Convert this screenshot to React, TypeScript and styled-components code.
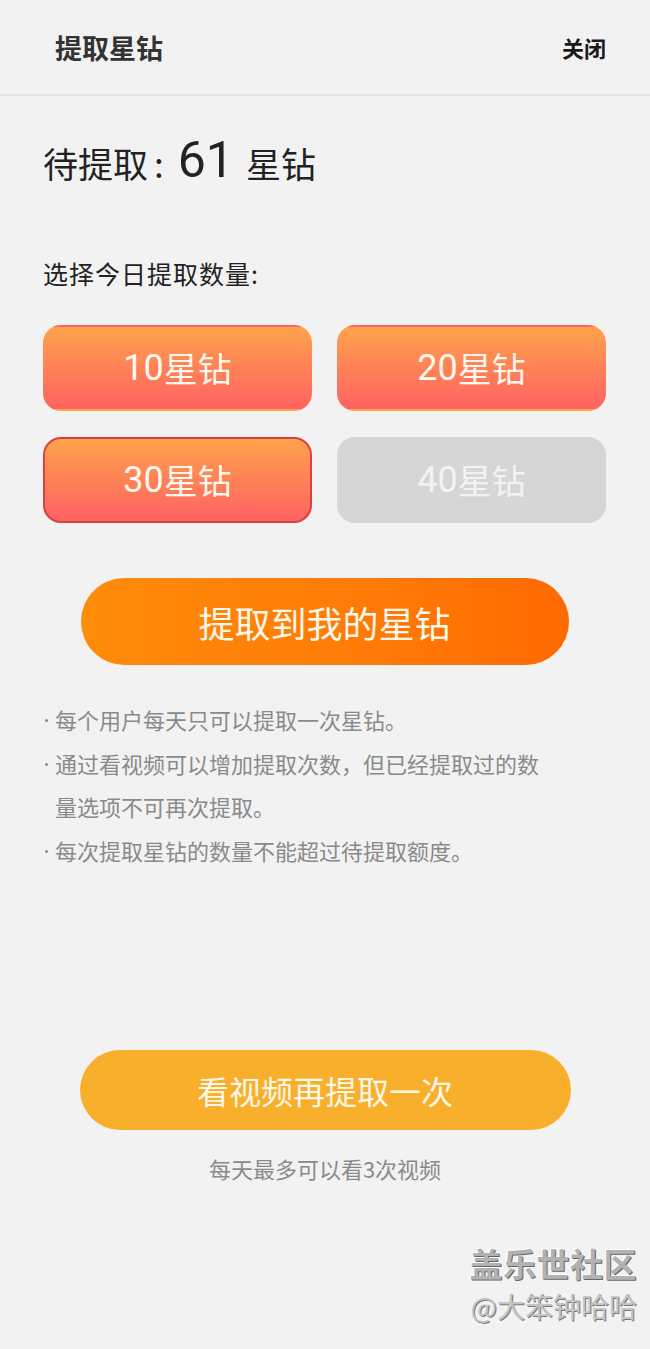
import React, { useState } from "react";
import styled, { createGlobalStyle, css } from "styled-components";

const Global = createGlobalStyle`
  html, body { margin: 0; padding: 0; background: #f2f2f2; }
  body { font-family: "Noto Sans CJK SC", "Noto Sans", sans-serif; }
  * { box-sizing: border-box; }
`;

const Page = styled.div`
  width: 650px;
  height: 1349px;
  background: #f2f2f2;
  display: flex;
  flex-direction: column;
`;

const Header = styled.header`
  height: 96px;
  flex: none;
  display: flex;
  align-items: center;
  justify-content: space-between;
  padding: 0 44px 0 55px;
  border-bottom: 2px solid #e6e6e6;
`;

const HeaderTitle = styled.h1`
  margin: 0;
  font-size: 27px;
  font-weight: 700;
  color: #333;
  line-height: 1;
`;

const CloseButton = styled.button`
  border: none;
  background: none;
  padding: 0;
  font-family: inherit;
  font-size: 22px;
  font-weight: 700;
  color: #1a1a1a;
  line-height: 1;
`;

const Body = styled.main`
  flex: 1;
  display: flex;
  flex-direction: column;
  padding: 0 43px;
`;

const Pending = styled.div`
  margin-top: 36px;
  height: 60px;
  display: flex;
  align-items: center;
  font-size: 35px;
  color: #222;
  line-height: 1;
`;

const Colon = styled.span`
  margin-left: 6px;
`;

const Amount = styled.span`
  font-family: "Roboto", "Noto Sans", sans-serif;
  font-size: 50px;
  margin: 0 12px 0 14px;
  position: relative;
  top: -2px;
`;

const Label = styled.div`
  margin-top: 66px;
  font-size: 25px;
  letter-spacing: 1px;
  color: #222;
  line-height: 30px;
`;

const Grid = styled.div`
  margin-top: 37px;
  display: grid;
  grid-template-columns: 269px 269px;
  column-gap: 25px;
  row-gap: 26px;
`;

const Choice = styled.button<{ $selected?: boolean; $disabled?: boolean }>`
  height: 86px;
  border-radius: 18px;
  border: 2px solid transparent;
  background: linear-gradient(180deg, #ffa24c 0%, #ff6262 100%);
  color: #fff8ee;
  font-family: "Noto Sans CJK SC", sans-serif;
  font-size: 34px;
  display: flex;
  align-items: center;
  justify-content: center;
  padding: 0;
  line-height: 1;
  ${(p) =>
    p.$selected &&
    css`
      border-color: #d9423e;
    `}
  ${(p) =>
    p.$disabled &&
    css`
      background: #d6d6d6;
      color: #f3f3f3;
    `}
`;

const Digits = styled.span`
  font-family: "Roboto", "Noto Sans", sans-serif;
  font-size: 36px;
`;

const PrimaryRow = styled.div`
  margin-top: 55px;
  display: flex;
  justify-content: center;
  padding-right: 1px;
`;

const PrimaryButton = styled.button`
  width: 488px;
  height: 87px;
  border: none;
  border-radius: 44px;
  background: linear-gradient(90deg, #ff8c0a 0%, #ff7a06 60%, #ff6a00 100%);
  color: #fff7ea;
  font-family: "Noto Sans CJK SC", sans-serif;
  font-size: 36px;
  line-height: 1;
`;

const Notes = styled.ul`
  list-style: none;
  margin: 33px 0 0 0;
  padding: 0 0 0 12px;
  font-size: 22px;
  line-height: 43.5px;
  color: #8a8a8a;
  width: 504px;
`;

const Note = styled.li`
  position: relative;
  &::before {
    content: "";
    position: absolute;
    left: -10px;
    top: 21px;
    width: 3px;
    height: 3px;
    border-radius: 50%;
    background: #8a8a8a;
  }
`;

const Spacer = styled.div`
  flex: 1;
`;

const WatchRow = styled.div`
  display: flex;
  justify-content: center;
`;

const WatchButton = styled.button`
  width: 491px;
  height: 80px;
  border: none;
  border-radius: 40px;
  background: #f8b02c;
  color: #fff7e8;
  font-family: "Noto Sans CJK SC", sans-serif;
  font-size: 32px;
  line-height: 1;
`;

const Hint = styled.div`
  margin-top: 25px;
  text-align: center;
  font-size: 22px;
  line-height: 26px;
  color: #8a8a8a;
`;

const Watermark = styled.div`
  margin-top: 66px;
  margin-bottom: 29px;
  align-self: flex-end;
  margin-right: -30px;
  display: flex;
  flex-direction: column;
  align-items: flex-end;
  line-height: 1;
`;

const WmTitle = styled.div`
  font-size: 33px;
  font-weight: 700;
  letter-spacing: 0.5px;
  color: #b2b2b2;
  text-shadow: 1px 1px 0 #666, -1px -1px 0 #fff;
`;

const WmUser = styled.div`
  margin-top: 12px;
  font-size: 28px;
  color: #c4c4c4;
  text-shadow: 1px 1px 0 #7a7a7a;
`;

const options = [10, 20, 30, 40];

export default function App() {
  const [selected, setSelected] = useState(30);
  return (
    <Page>
      <Global />
      <Header>
        <HeaderTitle>提取星钻</HeaderTitle>
        <CloseButton>关闭</CloseButton>
      </Header>
      <Body>
        <Pending>
          待提取<Colon>:</Colon>
          <Amount>61</Amount>星钻
        </Pending>
        <Label>选择今日提取数量:</Label>
        <Grid>
          {options.map((n) => (
            <Choice
              key={n}
              $selected={n === selected}
              $disabled={n === 40}
              onClick={() => n !== 40 && setSelected(n)}
            >
              <Digits>{n}</Digits>星钻
            </Choice>
          ))}
        </Grid>
        <PrimaryRow>
          <PrimaryButton>提取到我的星钻</PrimaryButton>
        </PrimaryRow>
        <Notes>
          <Note>每个用户每天只可以提取一次星钻。</Note>
          <Note>通过看视频可以增加提取次数，但已经提取过的数量选项不可再次提取。</Note>
          <Note>每次提取星钻的数量不能超过待提取额度。</Note>
        </Notes>
        <Spacer />
        <WatchRow>
          <WatchButton>看视频再提取一次</WatchButton>
        </WatchRow>
        <Hint>每天最多可以看3次视频</Hint>
        <Watermark>
          <WmTitle>盖乐世社区</WmTitle>
          <WmUser>@大笨钟哈哈</WmUser>
        </Watermark>
      </Body>
    </Page>
  );
}
